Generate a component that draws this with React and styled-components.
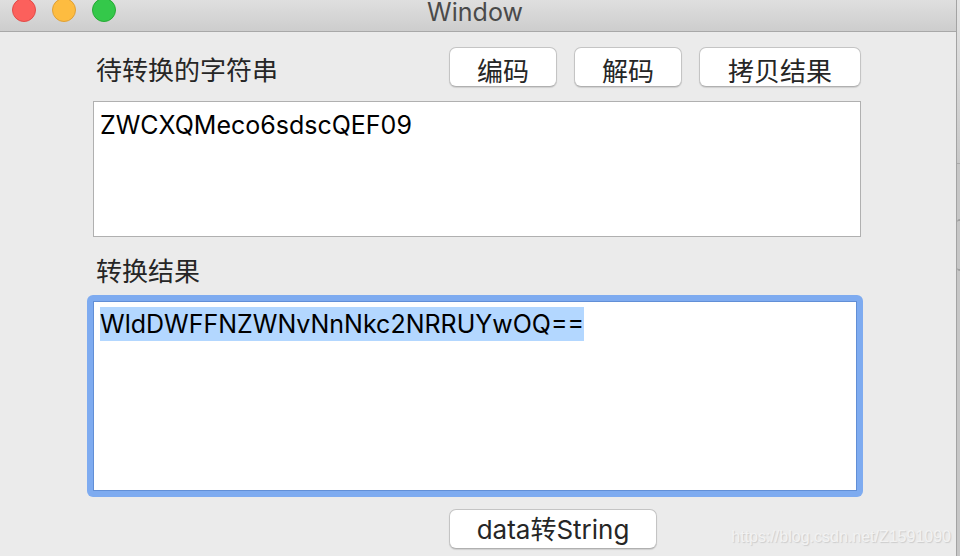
import React, { useEffect, useRef, useState } from "react";
import styled, { createGlobalStyle } from "styled-components";

const GlobalStyle = createGlobalStyle`
  * {
    box-sizing: border-box;
  }
  body {
    margin: 0;
    overflow: hidden;
    background-color: #ebebeb;
    font-family: Inter, "Noto Sans CJK SC", sans-serif;
  }
`;

const Desktop = styled.div`
  position: relative;
  display: flex;
  min-height: 100vh;
  overflow: hidden;
`;

const Window = styled.main`
  flex: 1;
  min-width: 0;
  background-color: #ebebeb;
  border-right: 1px solid #a3a3a3;
`;

const Behind = styled.div`
  width: 3px;
  display: flex;
  flex-direction: column;
  background-color: #c6c6c6;
`;

const BehindTop = styled.div`
  height: 164px;
  background: linear-gradient(#e4e4e4, #c8c8c8);
  border-bottom: 1px solid #aaaaaa;
`;

const BehindBox = styled.div`
  height: 52px;
  margin-top: 55px;
  border: solid #a0a0a0;
  border-width: 2px 0 2px 0;
  border-radius: 3px 0 0 3px;
`;

const TitleBar = styled.header`
  display: grid;
  grid-template-columns: 1fr auto 1fr;
  align-items: center;
  height: 44px;
  margin-top: -12px;
  padding: 0 18px 0 12px;
  background: linear-gradient(#e6e6e6, #cdcdcd);
  border-bottom: 1px solid #a8a8a8;
`;

const Lights = styled.div`
  display: flex;
  gap: 16px;
`;

const Light = styled.button`
  width: 24px;
  height: 24px;
  padding: 0;
  border: 1px solid ${(props) => props.$edge};
  border-radius: 50%;
  background-color: ${(props) => props.$color};
`;

const Title = styled.h1`
  margin: 0;
  padding-top: 4px;
  font-size: 25px;
  font-weight: normal;
  line-height: 20px;
  color: #4a4a4a;
`;

const Form = styled.div`
  display: flex;
  flex-direction: column;
  padding: 15px 95px 0 93px;
`;

const Toolbar = styled.div`
  display: flex;
  align-items: center;
  gap: 17px;
  margin-bottom: 14px;
`;

const Label = styled.label`
  flex: 1;
  padding: 8px 3px 0;
  font-size: 26px;
  line-height: 32px;
  color: #262626;
`;

const Button = styled.button`
  width: ${(props) => props.$width || "108px"};
  height: 40px;
  padding: 8px 0 0;
  border: 1px solid #c4c4c4;
  border-bottom-color: #b0b0b0;
  border-radius: 7px;
  background-color: white;
  box-shadow: 0 1px 1px rgba(0, 0, 0, 0.12);
  font-family: inherit;
  font-size: 26px;
  line-height: 32px;
  color: #262626;
`;

const WideButton = styled(Button)`
  padding-top: 2px;
`;

const TextBox = styled.textarea`
  display: block;
  height: 136px;
  padding: 6px;
  border: 1px solid #b0b0b0;
  border-radius: 0;
  outline: none;
  resize: none;
  background-color: white;
  font-family: inherit;
  font-size: 25px;
  line-height: 34px;
  color: black;
`;

const FocusRing = styled.div`
  margin: 0 -2px 0 -6px;
  padding: 6px;
  border-radius: 6px;
  background-color: #7eabf0;
`;

const ResultBox = styled(TextBox)`
  width: 100%;
  height: 190px;
  padding: 5px 6px;
  border-color: #628fd6;
  &::selection {
    background-color: rgba(179, 215, 255, 0.996);
    color: black;
  }
`;

const ResultLabel = styled(Label)`
  flex: none;
  padding-top: 19px;
  margin-bottom: 7px;
`;

const Footer = styled.div`
  margin-top: 12px;
  padding-left: 356px;
`;

const Watermark = styled.span`
  position: absolute;
  right: 9px;
  bottom: 9px;
  font-family: "Liberation Sans", Arial, sans-serif;
  font-size: 16px;
  line-height: 20px;
  color: #f2f2f2;
  text-shadow: 1px 1px 1px #cccccc;
  pointer-events: none;
`;

const App = () => {
  const [source, setSource] = useState("ZWCXQMeco6sdscQEF09");
  const [result, setResult] = useState("WldDWFFNZWNvNnNkc2NRRUYwOQ==");
  const resultRef = useRef(null);

  const selectResult = () => {
    resultRef.current.focus();
    resultRef.current.select();
  };

  useEffect(() => {
    selectResult();
  }, []);

  const encode = () => setResult(btoa(source));

  const decode = () => {
    try {
      setResult(atob(source));
    } catch (err) {
      setResult("");
    }
  };

  const copy = () => {
    selectResult();
    document.execCommand("copy");
  };

  return (
    <Desktop>
      <GlobalStyle />
      <Window>
        <TitleBar>
          <Lights>
            <Light $color="#fc605c" $edge="#e24b48" aria-label="Close" />
            <Light $color="#fdbc40" $edge="#dfa036" aria-label="Minimize" />
            <Light $color="#34c84a" $edge="#27aa35" aria-label="Zoom" />
          </Lights>
          <Title>Window</Title>
        </TitleBar>
        <Form>
          <Toolbar>
            <Label htmlFor="source">待转换的字符串</Label>
            <Button onClick={encode}>编码</Button>
            <Button onClick={decode}>解码</Button>
            <Button $width="162px" onClick={copy}>拷贝结果</Button>
          </Toolbar>
          <TextBox
            id="source"
            spellCheck={false}
            value={source}
            onChange={(e) => setSource(e.target.value)}
          />
          <ResultLabel htmlFor="result">转换结果</ResultLabel>
          <FocusRing>
            <ResultBox
              id="result"
              ref={resultRef}
              spellCheck={false}
              value={result}
              onChange={(e) => setResult(e.target.value)}
            />
          </FocusRing>
          <Footer>
            <WideButton $width="208px" onClick={decode}>data转String</WideButton>
          </Footer>
        </Form>
      </Window>
      <Behind>
        <BehindTop />
        <BehindBox />
      </Behind>
      <Watermark>https://blog.csdn.net/Z1591090</Watermark>
    </Desktop>
  );
};

export default App;
